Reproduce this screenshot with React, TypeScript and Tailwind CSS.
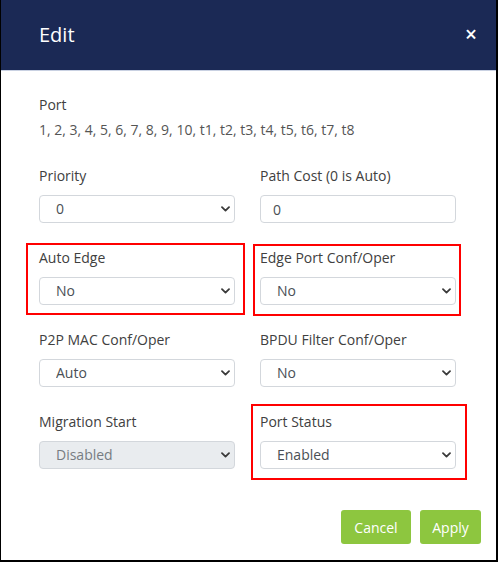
import React from "react";

type Marker = string | undefined;

function Chevron() {
  return (
    <svg
      className="pointer-events-none absolute right-[5px] top-1/2 -translate-y-1/2"
      width="9"
      height="6"
      viewBox="0 0 9 6"
      fill="none"
    >
      <path d="M1 1.2L4.5 4.6L8 1.2" stroke="#3a3a3a" strokeWidth="1.8" strokeLinecap="round" strokeLinejoin="round" />
    </svg>
  );
}

function SelectField({
  label,
  value,
  disabled,
  marker,
}: {
  label: string;
  value: string;
  disabled?: boolean;
  marker?: Marker;
}) {
  return (
    <div className="relative flex flex-col">
      {marker && <span className={`pointer-events-none absolute border-2 border-[#ff0000] ${marker}`} />}
      <label className="text-[14px] leading-[21px] text-[#404040]">{label}</label>
      <div className="relative mt-[9px]">
        <select
          disabled={disabled}
          defaultValue={value}
          className={`block h-[28px] w-full appearance-none rounded-[4px] border border-[#d3d7dc] pl-[16px] pr-6 text-[14px] leading-[20px] outline-none ${
            disabled ? "bg-[#e9ecef] text-[#777c82]" : "bg-white text-[#4a4f55]"
          }`}
          style={{ fontFamily: '"Open Sans", sans-serif' }}
        >
          <option value={value}>{value}</option>
        </select>
        <Chevron />
      </div>
    </div>
  );
}

function InputField({ label, value }: { label: string; value: string }) {
  return (
    <div className="flex flex-col">
      <label className="text-[14px] leading-[21px] text-[#404040]">{label}</label>
      <input
        defaultValue={value}
        className="mt-[9px] block h-[28px] w-full rounded-[4px] border border-[#d3d7dc] bg-white px-[12px] text-[14px] text-[#4a4f55] outline-none"
        style={{ fontFamily: '"Open Sans", sans-serif' }}
      />
    </div>
  );
}

export default function App() {
  return (
    <div
      className="flex h-[562px] w-[498px] flex-col border-b-2 border-l border-r-2 border-black bg-white"
      style={{ fontFamily: '"Open Sans", "Noto Sans", sans-serif' }}
    >
      <header className="flex h-[70px] shrink-0 items-center justify-between bg-[#1b2955] pl-[38px] pr-[19px]">
        <h1 className="text-[20px] leading-[28px] text-white">Edit</h1>
        <button className="pb-[2px] text-[21px] font-semibold leading-none text-white">×</button>
      </header>
      <div className="h-px shrink-0 bg-[#c9d1e2]" />

      <div className="flex flex-1 flex-col pl-[38px] pr-[40px] pt-[23px]">
        <div className="flex flex-col">
          <span className="text-[14px] leading-[21px] text-[#404040]">Port</span>
          <span className="mt-[4px] text-[14px] leading-[21px] text-[#555]">
            1, 2, 3, 4, 5, 6, 7, 8, 9, 10, t1, t2, t3, t4, t5, t6, t7, t8
          </span>
        </div>

        <div className="mt-[25px] grid grid-cols-2 gap-x-[25px] gap-y-[24px]">
          <SelectField label="Priority" value="0" />
          <InputField label="Path Cost (0 is Auto)" value="0" />
          <SelectField
            label="Auto Edge"
            value="No"
            marker="-left-[13px] -right-[10px] -top-[4px] -bottom-[10px]"
          />
          <SelectField
            label="Edge Port Conf/Oper"
            value="No"
            marker="-left-[7px] -right-[5px] -top-[3px] -bottom-[11px]"
          />
          <SelectField label="P2P MAC Conf/Oper" value="Auto" />
          <SelectField label="BPDU Filter Conf/Oper" value="No" />
          <SelectField label="Migration Start" value="Disabled" disabled />
          <SelectField
            label="Port Status"
            value="Enabled"
            marker="-left-[9px] -right-[11px] -top-[7px] -bottom-[11px]"
          />
        </div>
      </div>

      <footer className="flex justify-end gap-[9px] pb-[16px] pr-[15px]">
        <button className="h-[34px] w-[70px] rounded-[3px] bg-[#8dc63f] text-[14px] text-white">Cancel</button>
        <button className="h-[34px] w-[61px] rounded-[3px] bg-[#8dc63f] text-[14px] text-white">Apply</button>
      </footer>
    </div>
  );
}
